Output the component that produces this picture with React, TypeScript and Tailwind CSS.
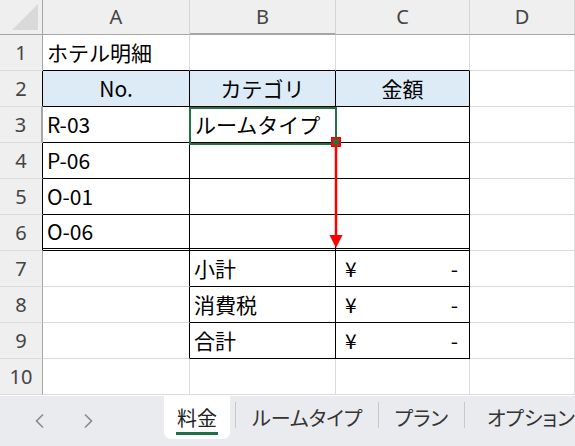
import React from "react";

const JP = "font-['Noto_Sans_CJK_JP','Noto_Sans',sans-serif]";
const HD = "font-['Noto_Sans','Open_Sans',sans-serif]";

type C = { t?: React.ReactNode; cls: string };

const G = "border-[#dadada]";

function Cell({ t, cls }: C) {
  return (
    <div className={`border-r border-b ${G} box-border flex items-center text-[21px] text-black ${JP} whitespace-nowrap overflow-visible ${cls}`}>
      {t}
    </div>
  );
}

function RowHead({ n, cls = "" }: { n: number; cls?: string }) {
  return (
    <div className={`bg-[#efefef] border-b border-r border-b-[#dcdcdc] border-r-[#a5a5a5] flex items-center justify-center text-[20px] text-[#444] ${HD} ${cls}`}>
      {n}
    </div>
  );
}

function ColHead({ l, cls = "" }: { l: string; cls?: string }) {
  return (
    <div className={`bg-[#efefef] border-r border-b border-r-[#d4d4d4] border-b-[#a5a5a5] flex items-center justify-center text-[20px] text-[#444] ${HD} ${cls}`}>
      {l}
    </div>
  );
}

function Yen() {
  return (
    <div className="flex w-full justify-between pl-[9px] pr-[11px]">
      <span>¥</span>
      <span>-</span>
    </div>
  );
}

export default function App() {
  return (
    <div className="relative w-[575px] h-[446px] overflow-hidden bg-white">
      <div className="grid grid-cols-[43px_147px_146px_134px_105px] grid-rows-[35px_repeat(10,36px)]">
        {/* header */}
        <div className="bg-[#efefef] border-r border-b border-r-[#a5a5a5] border-b-[#a5a5a5] relative">
          <svg className="absolute left-0 top-0" width="42" height="34" viewBox="0 0 42 34">
            <polygon points="38,4 38,30 12,30" fill="#d9d9d9" />
          </svg>
        </div>
        <ColHead l="A" />
        <ColHead l="B" cls="bg-[#e0e0e0] text-[#1e6b3f] border-b-2 border-b-[#217346]" />
        <ColHead l="C" />
        <ColHead l="D" />

        {/* row 1 */}
        <RowHead n={1} />
        <Cell t="ホテル明細" cls="pl-[4px] border-b-black" />
        <Cell cls="border-b-black" />
        <Cell cls="border-b-black" />
        <Cell cls="" />

        {/* row 2 */}
        <RowHead n={2} cls="border-r-black" />
        <Cell t="No." cls="justify-center bg-[#ddebf7] border-r-black border-b-black" />
        <Cell t="カテゴリ" cls="justify-center bg-[#ddebf7] border-r-black border-b-black" />
        <Cell t="金額" cls="justify-center bg-[#ddebf7] border-r-black border-b-black" />
        <Cell cls="" />

        {/* row 3 */}
        <RowHead n={3} cls="bg-[#e0e0e0] text-[#1e6b3f] border-r-2 border-r-[#217346]" />
        <Cell t="R-03" cls="pl-[4px] border-r-black border-b-black" />
        <Cell t="ルームタイプ" cls="pl-[5px] border-r-black border-b-black" />
        <Cell cls="border-r-black border-b-black" />
        <Cell cls="" />

        {/* row 4 */}
        <RowHead n={4} cls="border-r-black" />
        <Cell t="P-06" cls="pl-[4px] border-r-black border-b-black" />
        <Cell cls="border-r-black border-b-black" />
        <Cell cls="border-r-black border-b-black" />
        <Cell cls="" />

        {/* row 5 */}
        <RowHead n={5} cls="border-r-black" />
        <Cell t="O-01" cls="pl-[4px] border-r-black border-b-black" />
        <Cell cls="border-r-black border-b-black" />
        <Cell cls="border-r-black border-b-black" />
        <Cell cls="" />

        {/* row 6 */}
        <RowHead n={6} cls="border-r-black" />
        <Cell t="O-06" cls="pl-[4px] border-r-black border-b-[3px] border-double border-b-black" />
        <Cell cls="border-r-black border-b-[3px] border-double border-b-black" />
        <Cell cls="border-r-black border-b-[3px] border-double border-b-black" />
        <Cell cls="" />

        {/* row 7 */}
        <RowHead n={7} />
        <Cell cls="border-r-black" />
        <Cell t="小計" cls="pl-[4px] border-r-black border-b-black" />
        <Cell t={<Yen />} cls="border-r-black border-b-black" />
        <Cell cls="" />

        {/* row 8 */}
        <RowHead n={8} />
        <Cell cls="border-r-black" />
        <Cell t="消費税" cls="pl-[4px] border-r-black border-b-black" />
        <Cell t={<Yen />} cls="border-r-black border-b-black" />
        <Cell cls="" />

        {/* row 9 */}
        <RowHead n={9} />
        <Cell cls="border-r-black" />
        <Cell t="合計" cls="pl-[4px] border-r-black border-b-black" />
        <Cell t={<Yen />} cls="border-r-black border-b-black" />
        <Cell cls="" />

        {/* row 10 */}
        <RowHead n={10} />
        <Cell cls="" />
        <Cell cls="" />
        <Cell cls="" />
        <Cell cls="" />
      </div>

      {/* selection */}
      <div className="absolute left-[189px] top-[107px] w-[148px] h-[38px] border-2 border-[#217346] pointer-events-none" />
      {/* arrow */}
      <svg className="absolute left-[329px] top-[146px]" width="14" height="104" viewBox="0 0 14 104">
        <line x1="7" y1="0" x2="7" y2="92" stroke="#ff0000" strokeWidth="2.5" />
        <polygon points="0.5,89 13.5,89 7,102" fill="#ff0000" />
      </svg>
      {/* fill handle */}
      <div className="absolute left-[331px] top-[137px] w-[10px] h-[10px] border-2 border-[#ff0000] bg-[#217346]" />

      {/* tab bar */}
      <div className={`flex h-[50px] mt-[1px] bg-[#e9ebee] ${JP} [font-feature-settings:'palt']`}>
        <div className="w-[166px] relative">
          <svg className="absolute left-[34px] top-[17px]" width="12" height="16" viewBox="0 0 12 16">
            <polyline points="9,1.5 2.5,8 9,14.5" fill="none" stroke="#8a8a8a" strokeWidth="1.6" />
          </svg>
          <svg className="absolute left-[82px] top-[17px]" width="12" height="16" viewBox="0 0 12 16">
            <polyline points="3,1.5 9.5,8 3,14.5" fill="none" stroke="#8a8a8a" strokeWidth="1.6" />
          </svg>
        </div>
        <div className="w-[66px] h-[43px] bg-white rounded-b-[7px] flex flex-col items-center">
          <div className="mt-[8px] h-[28px] leading-[28px] text-[20px] text-[#222]">料金</div>
          <div className="w-[42px] h-[3px] bg-[#1e7145]" />
        </div>
        <div className="w-[6px]" />
        <div className="w-px h-[26px] mt-[6px] bg-[#c8c8c8]" />
        <div className="w-[143px] text-center mt-[8px] h-[28px] leading-[28px] text-[20px] text-[#333]">ルームタイプ</div>
        <div className="w-px h-[26px] mt-[6px] bg-[#c8c8c8]" />
        <div className="w-[86px] text-center mt-[8px] h-[28px] leading-[28px] text-[20px] text-[#333]">プラン</div>
        <div className="w-px h-[26px] mt-[6px] bg-[#c8c8c8]" />
        <div className="pl-[22px] whitespace-nowrap mt-[8px] h-[28px] leading-[28px] text-[20px] text-[#333]">オプション</div>
      </div>
    </div>
  );
}
